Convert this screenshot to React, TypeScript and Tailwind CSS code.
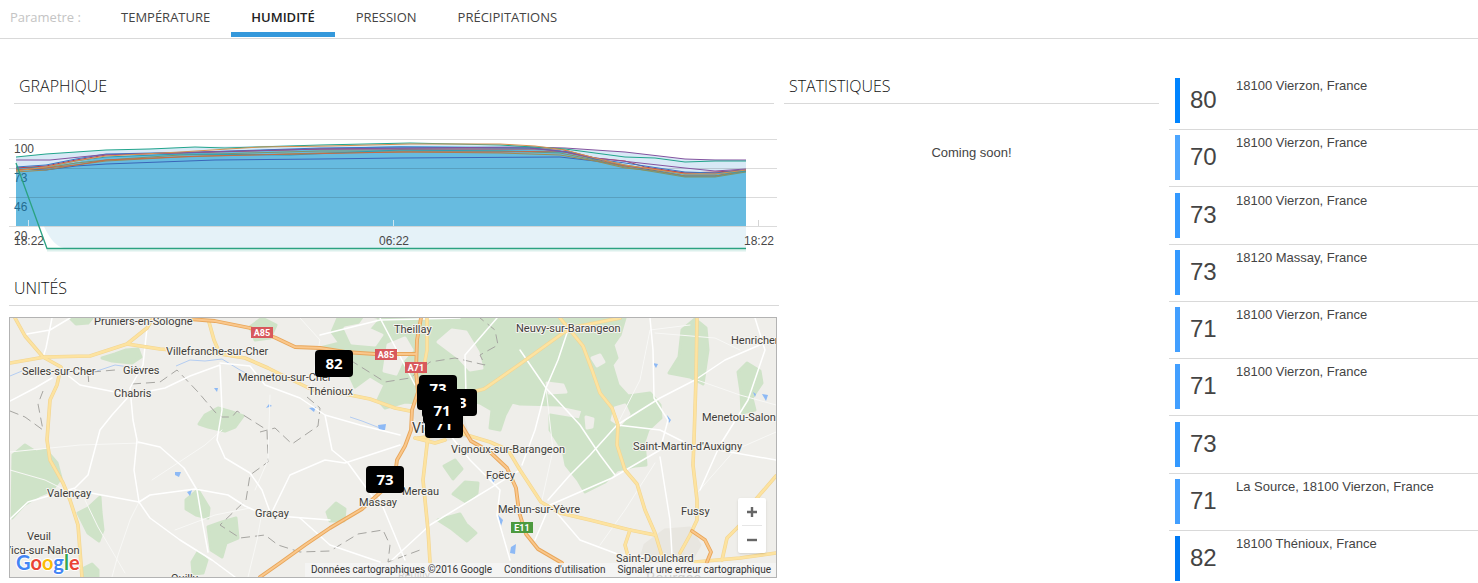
import React, { useState } from "react";

const TABS = ["TEMPÉRATURE", "HUMIDITÉ", "PRESSION", "PRÉCIPITATIONS"];

const UNITS = [
  { value: 80, place: "18100 Vierzon, France", bar: "bg-[#0084ff]" },
  { value: 70, place: "18100 Vierzon, France", bar: "bg-[#4da6ff]" },
  { value: 73, place: "18100 Vierzon, France", bar: "bg-[#3399ff]" },
  { value: 73, place: "18120 Massay, France", bar: "bg-[#3399ff]" },
  { value: 71, place: "18100 Vierzon, France", bar: "bg-[#429fff]" },
  { value: 71, place: "18100 Vierzon, France", bar: "bg-[#429fff]" },
  { value: 73, place: "", bar: "bg-[#3399ff]" },
  { value: 71, place: "La Source, 18100 Vierzon, France", bar: "bg-[#429fff]" },
  { value: 82, place: "18100 Thénioux, France", bar: "bg-[#007af5]" },
];

const SERIES: { color: string; points: string }[] = [
  { color: "#3a66b8", points: "16,169 46,170 76,166 106,164 215,160 320,159 400,158 560,157 595,161 640,168 685,176 715,176 746,171" },
  { color: "#a08a52", points: "16,172 46,170 76,165 106,161 180,157 320,153 410,152 500,153 560,155 595,161 625,168 655,171 685,176 715,176 746,171" },
  { color: "#7f9468", points: "16,170 46,168 76,163 106,160 180,155 320,151 410,151 500,151 560,153 595,160 625,167 685,177 715,177 746,172" },
  { color: "#2b9fb5", points: "16,168 46,167 76,161 106,157 180,154 290,155 400,150 500,151 565,152 595,158 625,165 685,174 715,174 746,171" },
  { color: "#c96a45", points: "16,170 46,168 76,165 106,160 200,156 300,154 400,152 500,152 560,151 595,159 625,166 685,173 715,173 746,170" },
  { color: "#bd3f4c", points: "16,168 46,166 76,160 106,155 250,151 320,149 410,149 560,149 595,158 625,161 645,167 685,173 715,172 746,170" },
  { color: "#3976c4", points: "16,167 46,165 76,159 106,154 200,152 320,148 400,147 530,148 570,152 595,159 625,163 685,172 715,173 746,170" },
  { color: "#84539f", points: "16,160 50,160 100,155 200,152 320,149 410,148 530,147 565,148 625,152 685,159 715,160 746,160" },
  { color: "#84539f", points: "530,148 565,152 595,158 640,163 685,168 715,171 746,169" },
  { color: "#22a58c", points: "16,157 46,154 106,150 150,149 195,147 225,148 320,145 410,143 500,145 565,149 595,153 625,157 655,158 685,162 715,161 746,161" },
  { color: "#d6914e", points: "16,171 46,167 76,161 106,156 180,152 260,147 330,146 410,144 500,144 535,146 565,150 595,158 625,165 685,174 715,174 746,170" },
];

function HumidityChart() {
  return (
    <svg viewBox="9 132 768 122" className="block w-full" role="img" aria-label="Humidité">
      <path d="M16 157 46 154 106 150 195 147 320 145 410 143 500 144 565 148 625 152 685 159 746 160V178H16Z" fill="#d8e9f6" />
      <path d="M16 169 46 167 76 162 106 157 180 153 260 150 400 146 530 147 565 151 595 159 640 168 685 174 715 174 746 170V226H16Z" fill="#67bbe0" />
      <path d="M44 226.500H746V248H64Q53 246 44 226.500Z" fill="#e5f2f8" />
      <path d="M47 250.500H746" stroke="#dcf0ec" strokeWidth="2" />
      <path d="M9 139.500H777M9 168.500H777M9 197.500H777M9 226.500H777" stroke="#000" strokeOpacity=".14" />
      <path d="M28.500 220V226M393.500 220V226" stroke="#cfe6f1" />
      <path d="M758.500 220V226" stroke="#d5d5d5" />
      <g fill="#484848" fontFamily="Liberation Sans, sans-serif" fontSize="12">
        <text x="14" y="153">100</text>
        <text x="14" y="182" fill="#246c91">73</text>
        <text x="14" y="211" fill="#246c91">46</text>
        <text x="14" y="240">20</text>
        <text x="14" y="245">18:22</text>
        <text x="379" y="245">06:22</text>
        <text x="744" y="245">18:22</text>
      </g>
      <g fill="none" strokeWidth="1">
        {SERIES.map((s, i) => (
          <polyline key={i} points={s.points} stroke={s.color} />
        ))}
        <polyline points="16,163 47,248.500 746,248.500" stroke="#2ba281" strokeWidth="1.300" />
      </g>
    </svg>
  );
}

const FORESTS = [
  "M338 318H625L620 335 613 345 617 358 612 365 618 385 628 396 650 393 660 405 661 418 648 430 644 442 646 465 635 466 617 470 605 482 585 492 578 480 566 465 563 450 550 430 550 415 580 420 583 410 560 405 520 404 512 402 505 415 500 430 490 428 492 410 480 403 450 396 430 404 405 402 385 408 378 400 385 385 370 376 355 387 350 376 335 372 320 348 340 343 332 332Z",
  "M102 358 115 354 126 350 138 349 141 357 132 363 112 361Z",
  "M70 318H92L88 323 76 324Z",
  "M250 327 262 318 276 325 270 338 255 340Z",
  "M199 424 205 415 218 408 232 412 243 416 235 427 225 431 208 427Z",
  "M13 455 25 445 36 452 46 450 57 463 61 478 52 490 40 495 24 505 12 518Z",
  "M78 513 88 508 100 497 101 512 103 530 99 541 88 533Z",
  "M186 500 198 490 209 508 208 518 196 515 186 509Z",
  "M208 527 222 522 236 518 238 538 226 543 222 557 211 550Z",
  "M192 562 198 552 207 560 203 573 193 574Z",
  "M84 568 92 564 98 570 98 577H82Z",
  "M682 330 695 319 706 328 708 350 703 384 690 377 669 373 679 357Z",
  "M738 372 747 363 760 371 762 383 752 398 755 410 742 413 741 392Z",
  "M327 512 336 503 345 509 344 521 330 521Z",
  "M444 466 455 460 462 469 453 479Z",
  "M453 494 465 482 478 483 477 493 466 502Z",
  "M438 520 460 514 466 524 476 533 467 541 452 529Z",
];

const CLEARINGS = [
  "M345 328 360 325 382 335 375 345 352 343Z",
  "M388 345 405 338 412 350 402 361 396 374 384 371Z",
  "M438 342 452 330 466 332 478 352 482 368 470 370 458 357Z",
  "M592 358 600 355 604 362 597 366Z",
  "M547 383 563 385 566 392 549 393Z",
  "M615 408 625 405 629 414 620 425 612 420Z",
  "M586 417 593 419 592 427 587 428Z",
  "M365 318 376 320 370 327 360 325Z",
];

const MINOR = [
  "M52 318 46 348 43 357M27 334 50 330 70 318M10 401 35 388 52 378",
  "M147 328 143 365 130 388 133 420 137 440 134 470 139 502 150 518 180 540 212 560 235 577",
  "M61 370 80 385 115 392 130 395 165 388 190 376 220 365 222 410 217 440 225 458 250 473 262 490 270 512",
  "M130 395 112 415 100 430 88 475 75 488 28 502 10 519",
  "M75 490 139 502 150 495 195 489 228 495 245 506 265 515 330 520",
  "M138 442 160 447 184 468 197 490 202 520 208 552",
  "M220 363 250 366 265 385 300 398 325 415 360 425 400 435M325 415 332 450 348 463 375 500",
  "M272 512 290 475 325 460 345 463 400 445M300 518 330 545 380 562M378 495 405 560",
  "M392 560 430 525 520 470M430 410 470 460 500 490 497 515 510 560",
  "M320 335 380 320 460 318M380 318 402 360 415 385M465 355 466 395 460 420M465 355 497 318",
  "M520 350 546 388 580 425 600 455 615 475",
  "M568 330 558 360 546 388 535 430 522 465M617 425 660 398 695 380 725 360 776 338",
  "M617 425 590 455 570 475 548 500M617 425 660 430 690 445 776 460",
  "M650 318 653 350 654 398 668 420 660 450 612 478 550 505 535 540",
  "M755 318 765 350 748 400 720 445 700 490",
  "M660 457 670 520 672 555M550 505 580 540 620 555 650 556",
];

const LANES = [
  "M139 502 130 520 118 555 112 577M85 500 98 527 125 573M10 470 45 480 67 491",
  "M270 395 268 460 255 490M300 318 320 340 310 390M262 512 257 540 248 577",
  "M546 388 553 450 542 500M617 425 640 380 650 330 690 325M655 463 625 510 600 545",
  "M697 493 735 450 776 432M697 380 740 395 776 405M655 333 715 338 740 350",
  "M10 452 80 445 140 443M152 480 205 445 222 430M175 530 215 515 250 508",
];

const YELLOW = [
  "M15 318 25 336 43 357 61 367 57 385 50 400 47 440 50 460 63 483 70 500 78 525 82 577",
  "M10 363 45 357 90 356 127 344 147 328 153 318M127 344 160 349 220 354 245 358 268 368 290 379",
  "M209 322 214 340 220 354M290 379 317 392 345 394 370 399 395 408 410 411",
  "M427 318 427 350 423 372M428 436 423 480 428 530 430 562M418 438 460 433 490 442 508 450 520 470 541 502 560 513 590 520 630 530 655 535",
  "M460 395 484 389 500 378 520 364 563 333 575 327 620 318M560 318 570 330 583 346 592 370 600 393 612 408 618 425 617 445 625 470 637 484 645 510 655 533 662 556",
  "M697 318 696 378 694 440 693 465 697 500 697 520 690 535 680 553M776 476 763 491 745 512 740 525 727 538 722 560",
  "M630 530 625 545 628 556M695 562 740 558 776 553M415 438 435 443 445 440",
];

const ORANGE = [
  "M190 319 215 321 250 328 276 338 295 347 320 348 345 352 375 354 416 354",
  "M421 318 417 340 416 372 418 392 412 410 411 430 405 446 397 460 395 475 383 490 362 509 330 528 305 545 280 563 260 577",
  "M461 424 471 441 490 452 507 468 516 488 519 512 526 534 538 549 562 563",
  "M692 531 705 540 711 552 707 562",
];

const BORDERS = [
  "M92 372 115 370M10 411 25 417 43 430 38 404 43 391M88 373 89 386M132 384 160 382 177 370 198 392 215 412 222 417 232 417 237 411 267 430 268 462 250 475 246 500 220 525 240 538 265 535 278 545 300 552 330 551 358 534 383 530 390 545 388 562 420 550",
  "M350 360 385 382 410 378 430 362 455 358 485 365 480 355 498 345 495 330 480 318",
  "M307 397 320 408 318 426 292 444 275 428 260 432",
];

const WATER = [
  "M378 425 386 424 385 430 379 430Z", "M175 472 181 472 179 477 175 475Z", "M214 388 218 388 217 392Z",
  "M653 363 658 364 656 368Z", "M762 394 768 395 766 401Z", "M309 408 316 407 314 412Z", "M187 492 192 490 190 496Z",
  "M511 547 516 544 515 554 510 553Z", "M490 473 496 478 493 483Z", "M498 515 503 520 501 526Z", "M753 392 756 394 755 397Z",
  "M667 415 671 420 669 423Z", "M269 404 272 406 266 408Z",
];

const PLACES: [string, number, number, number?][] = [
  ["Pruniers-en-Sologne", 94, 325],
  ["Villefranche-sur-Cher", 166, 355],
  ["Selles-sur-Cher", 22, 375],
  ["Gièvres", 123, 374],
  ["Chabris", 114, 397],
  ["Mennetou-sur-Cher", 238, 381],
  ["Thénioux", 308, 395],
  ["Theillay", 394, 333],
  ["Neuvy-sur-Barangeon", 516, 332],
  ["Henrichemont", 731, 344],
  ["Menetou-Salon", 702, 421],
  ["Saint-Martin-d'Auxigny", 633, 450],
  ["Vignoux-sur-Barangeon", 451, 453],
  ["Vierzon", 412, 433, 14],
  ["Foëcy", 486, 479],
  ["Mereau", 402, 495],
  ["Massay", 359, 506],
  ["Mehun-sur-Yèvre", 498, 513],
  ["Fussy", 681, 515],
  ["Saint-Doulchard", 616, 562],
  ["Graçay", 255, 517],
  ["Valençay", 47, 497],
  ["Veuil", 27, 540],
  ["Vicq-sur-Nahon", 4, 554],
  ["Quilly", 171, 582],
  ["Reuilly", 398, 579],
  ["Bourges", 646, 583, 15],
];

const SHIELDS: [string, number, number, string][] = [
  ["A85", 251, 327, "#d8585c"],
  ["A85", 375, 349, "#d8585c"],
  ["A71", 405, 362, "#d8585c"],
  ["E11", 511, 522, "#4d9a3f"],
];

function MapCanvas() {
  return (
    <svg viewBox="10 318 766 259" className="block w-full" role="img" aria-label="Carte des unités">
      <rect x="10" y="318" width="766" height="259" fill="#efeeea" />
      <g fill="#cfe3c8" stroke="#cfe3c8" strokeWidth="3" strokeLinejoin="round">
        {FORESTS.map((d) => <path key={d} d={d} />)}
      </g>
      <g fill="#efeeea" stroke="#efeeea" strokeWidth="3" strokeLinejoin="round">
        {CLEARINGS.map((d) => <path key={d} d={d} />)}
        <path d="M412 412 440 402 462 415 468 436 430 442Z" fill="#e8e6e0" stroke="#e8e6e0" />
        <path d="M645 545 665 530 690 528 700 545 690 562 640 562Z" fill="#e8e6e0" stroke="#e8e6e0" />
      </g>
      <path
        d="M10 376 22 371M97 371 115 365 150 370M176 366 190 360 205 361 222 359 240 370 255 378M350 417 362 421 380 428"
        fill="none"
        stroke="#b4cdf2"
      />
      <g fill="#8db9f5">{WATER.map((d) => <path key={d} d={d} />)}</g>
      <g fill="none" strokeLinejoin="round" strokeLinecap="round">
        <g stroke="#a6a5a1" strokeDasharray="9 5" strokeLinecap="butt">{BORDERS.map((d) => <path key={d} d={d} />)}</g>
        <g stroke="#f8f8f6" strokeWidth="1">{LANES.map((d) => <path key={d} d={d} />)}</g>
        <g stroke="#fff" strokeWidth="1.500">{MINOR.map((d) => <path key={d} d={d} />)}</g>
        <g stroke="#f2d592" strokeWidth="3.600">{YELLOW.map((d) => <path key={d} d={d} />)}</g>
        <g stroke="#fde3a0" strokeWidth="2.400">{YELLOW.map((d) => <path key={d} d={d} />)}</g>
        <g stroke="#e8a75c" strokeWidth="3.800">{ORANGE.map((d) => <path key={d} d={d} />)}</g>
        <g stroke="#fac78b" strokeWidth="2">{ORANGE.map((d) => <path key={d} d={d} />)}</g>
      </g>
      <g fontFamily="Roboto, sans-serif" fill="#3f3d3a" stroke="#f5f4f0" strokeWidth="2" strokeLinejoin="round" paintOrder="stroke">
        {PLACES.map(([name, x, y, size]) => (
          <text key={name} x={x} y={y} fontSize={size ?? 11}>{name}</text>
        ))}
      </g>
      <g fontFamily="Roboto, sans-serif" fontSize="9" fontWeight="700" textAnchor="middle" fill="#fff">
        {SHIELDS.map(([name, x, y, color]) => (
          <g key={x}>
            <rect x={x} y={y} width="22" height="11" fill={color} />
            <text x={x + 11} y={y + 9}>{name}</text>
          </g>
        ))}
      </g>
      <text x="16" y="570" fontFamily="Lato, sans-serif" fontSize="20" fontWeight="700" stroke="#fff" strokeWidth="2" paintOrder="stroke">
        <tspan fill="#4285f4">G</tspan>
        <tspan fill="#ea4335">o</tspan>
        <tspan fill="#fbbc05">o</tspan>
        <tspan fill="#4285f4">g</tspan>
        <tspan fill="#34a853">l</tspan>
        <tspan fill="#ea4335">e</tspan>
      </text>
    </svg>
  );
}

const MARKERS = [
  { value: 82, place: "left-[305px] top-[32px]" },
  { value: 73, place: "left-[356px] top-[148px]" },
  { value: 73, place: "left-[429px] top-[71px]" },
  { value: 71, place: "left-[415px] top-[93px]" },
  { value: 70, place: "left-[407px] top-[65px]" },
  { value: 73, place: "left-[409px] top-[57px]" },
  { value: 80, place: "left-[412px] top-[73px]" },
  { value: 71, place: "left-[413px] top-[79px]" },
];

function UnitMap() {
  return (
    <div className="relative ml-[9px] mr-[7px] mt-[11px] overflow-hidden border border-[#b3b3b3]">
      <MapCanvas />
      {MARKERS.map((m, i) => (
        <span
          key={i}
          className={`absolute flex h-[27px] w-[38px] items-center justify-center rounded bg-black font-['Open_Sans',sans-serif] text-[15px] font-bold text-white ${m.place}`}
        >
          {m.value}
        </span>
      ))}
      <div className="absolute right-[10px] top-[180px] flex w-7 flex-col items-center rounded-xs bg-white text-[#666] shadow">
        <button type="button" aria-label="Zoom avant" className="flex h-[27px] w-7 items-center justify-center">
          <svg width="10" height="10" viewBox="0 0 10 10" aria-hidden="true">
            <path d="M5 0V10M0 5H10" stroke="currentColor" strokeWidth="2.400" />
          </svg>
        </button>
        <span className="h-px w-5 bg-[#e6e6e6]" />
        <button type="button" aria-label="Zoom arrière" className="flex h-[27px] w-7 items-center justify-center">
          <svg width="10" height="10" viewBox="0 0 10 10" aria-hidden="true">
            <path d="M0 5H10" stroke="currentColor" strokeWidth="2.400" />
          </svg>
        </button>
      </div>
      <div className="absolute bottom-0 right-0 flex h-[14px] items-center gap-3 bg-[#f5f5f5]/80 pr-[5px] pl-1.5 font-['Roboto',sans-serif] text-[10px] leading-none text-[#333]">
        <span>Données cartographiques ©2016 Google</span>
        <a href="#conditions">Conditions d'utilisation</a>
        <a href="#signaler">Signaler une erreur cartographique</a>
      </div>
    </div>
  );
}

function Heading({ children }: { children: React.ReactNode }) {
  return (
    <h2 className="h-[35px] border-b border-[#d9d9d9] px-[5px] pt-[5px] font-['Open_Sans',sans-serif] text-base leading-6 font-light text-[#111]">
      {children}
    </h2>
  );
}

export default function App() {
  const [tab, setTab] = useState("HUMIDITÉ");
  return (
    <div className="bg-white font-['Liberation_Sans',sans-serif] text-[13px] text-[#444]">
      <nav className="flex h-[39px] gap-px border-b border-[#d9d9d9] pl-[10px] font-['Open_Sans',sans-serif]">
        <span className="w-[90px] pt-[7px] leading-5 text-[#c4c4c4]">Parametre :</span>
        {TABS.map((t) => (
          <button
            key={t}
            type="button"
            onClick={() => setTab(t)}
            className={
              t === tab
                ? "h-[37px] cursor-pointer border-b-5 border-[#3498db] px-5 pb-[5px] pt-[7px] leading-5 font-semibold text-[#222]"
                : "h-[37px] cursor-pointer border-b-5 border-transparent px-5 pb-[5px] pt-[7px] leading-5 text-[#444]"
            }
          >
            {t}
          </button>
        ))}
      </nav>
      <main className="grid grid-cols-[minmax(0,784fr)_minmax(0,385fr)_minmax(0,309fr)]">
        <div className="pt-[30px]">
          <section className="ml-[14px] mr-[10px]">
            <Heading>GRAPHIQUE</Heading>
          </section>
          <div className="ml-[9px] mr-[7px] pt-7">
            <HumidityChart />
          </div>
          <section className="ml-[9px] mr-[5px] pt-[17px]">
            <Heading>UNITÉS</Heading>
          </section>
          <UnitMap />
        </div>
        <section className="pt-[30px] pr-[10px]">
          <Heading>STATISTIQUES</Heading>
          <p className="pt-[39px] text-center leading-5">Coming soon!</p>
        </section>
        <ul className="mt-[34px] flex h-[508px] flex-col justify-between">
          {UNITS.map((u, i) => (
            <li
              key={i}
              className="flex border-b border-[#d9d9d9] pt-[5px] pb-1.5 pl-1.5 last:border-b-0 last:pb-0"
            >
              <span className={`h-[45px] w-[5px] ${u.bar}`} />
              <span className="w-14 pl-2.5 text-2xl leading-[43px]">{u.value}</span>
              <span className="leading-4">{u.place}</span>
            </li>
          ))}
        </ul>
      </main>
    </div>
  );
}
